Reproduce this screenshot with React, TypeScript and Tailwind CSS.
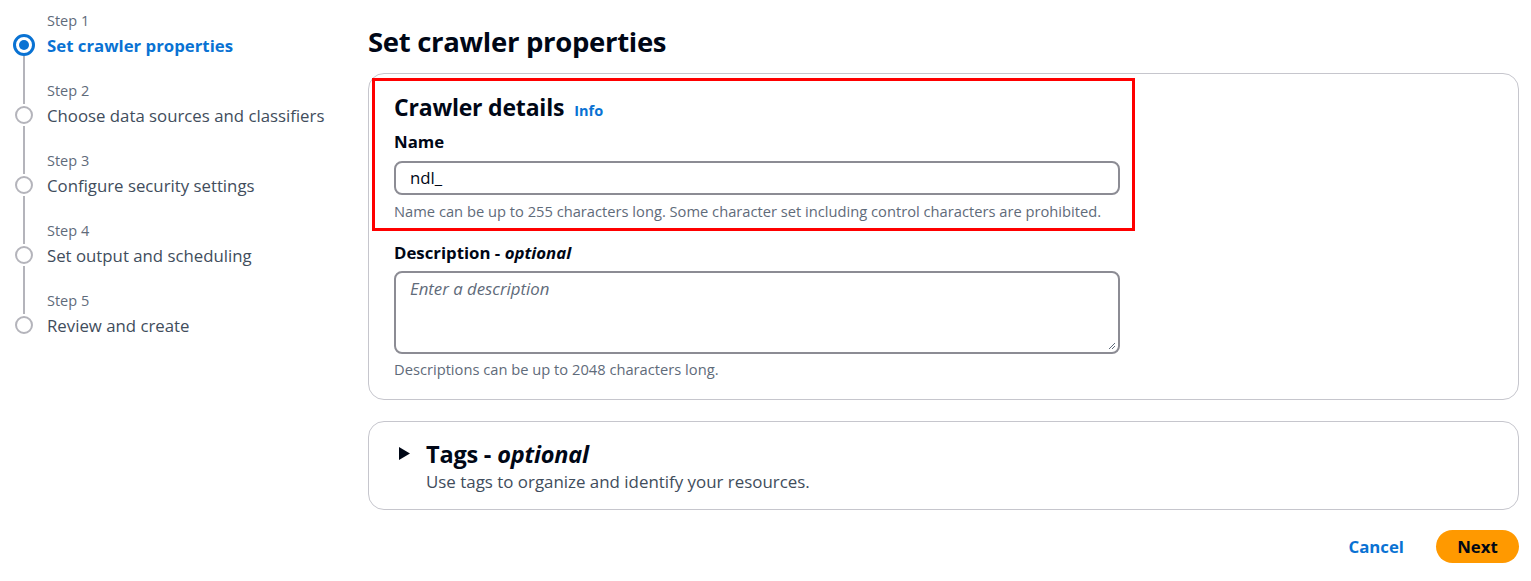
import React from "react";

const steps = [
  { n: 1, label: "Set crawler properties", active: true },
  { n: 2, label: "Choose data sources and classifiers" },
  { n: 3, label: "Configure security settings" },
  { n: 4, label: "Set output and scheduling" },
  { n: 5, label: "Review and create" },
];

export default function App() {
  return (
    <div
      className="w-[1531px] h-[581px] bg-white flex text-[#000716] overflow-hidden"
      style={{ fontFamily: "'Open Sans', 'Noto Sans', sans-serif" }}
    >
      {/* Left nav */}
      <div className="w-[368px] shrink-0 pl-[13px] pt-[11px]">
        {steps.map((s, i) => (
          <div key={s.n} className="flex">
            <div className="w-[22px] flex flex-col items-center">
              <div className={`w-[2px] h-[23px] ${i === 0 ? "bg-transparent" : "bg-[#b4b4bb]"}`} />
              {s.active ? (
                <div className="w-[22px] h-[22px] rounded-full border-[3px] border-[#0972d3] flex items-center justify-center shrink-0">
                  <div className="w-[10px] h-[10px] rounded-full bg-[#0972d3]" />
                </div>
              ) : (
                <div className="w-[18px] h-[18px] rounded-full border-[2px] border-[#b4b4bb] shrink-0 my-[2px]" />
              )}
              <div className={`w-[2px] flex-1 ${i === steps.length - 1 ? "bg-transparent" : "bg-[#b4b4bb]"}`} />
            </div>
            <div className="pl-[12px] h-[70px]">
              <div className="text-[14.5px] text-[#5f6b7a] leading-[18px] pt-[1px]">Step {s.n}</div>
              <div
                className={`text-[16.8px] leading-[22px] mt-[5px] ${
                  s.active ? "text-[#0972d3] font-bold" : "text-[#414d5c]"
                }`}
              >
                {s.label}
              </div>
            </div>
          </div>
        ))}
      </div>

      {/* Main */}
      <div className="flex-1 pr-[12px] pt-[24px]">
        <h1 className="text-[27.5px] font-bold leading-[36px] tracking-[-0.3px]">Set crawler properties</h1>

        <div className="mt-[13px] border border-[#c6c6cd] rounded-[16px] pt-[4px] pl-[3px] pb-[21px]">
          <div className="w-[763px] border-[3px] border-[#ff0000] pl-[19px] pr-[12px] pt-[12px] pb-[8px]">
            <div className="flex items-baseline gap-[10px]">
              <span className="text-[23px] font-bold leading-[28px] tracking-[-0.2px]">Crawler details</span>
              <span className="text-[14.5px] font-bold text-[#0972d3]">Info</span>
            </div>
            <div className="text-[16.8px] font-bold leading-[22px] mt-[9px]">Name</div>
            <div className="mt-[8px] h-[34px] border-2 border-[#8c8c94] rounded-[8px] flex items-center pl-[14px] text-[16.8px]">
              ndl_
            </div>
            <div className="text-[14.7px] text-[#5f6b7a] leading-[18px] mt-[7px]">
              Name can be up to 255 characters long. Some character set including control characters are prohibited.
            </div>
          </div>
          <div className="pl-[22px]">
            <div className="text-[16.8px] font-bold leading-[22px] mt-[11px]">
              Description - <i>optional</i>
            </div>
            <div className="mt-[7px] w-[726px] h-[83px] border-2 border-[#8c8c94] rounded-[8px] pl-[14px] pt-[3px] relative">
              <span className="text-[16.8px] italic text-[#5f6b7a]">Enter a description</span>
              <svg className="absolute right-[2px] bottom-[2px]" width="8" height="8" viewBox="0 0 8 8">
                <path d="M7 1L1 7M7 4L4 7" stroke="#5f6b7a" strokeWidth="1" />
              </svg>
            </div>
            <div className="text-[14.7px] text-[#5f6b7a] leading-[18px] mt-[6px]">
              Descriptions can be up to 2048 characters long.
            </div>
          </div>
        </div>

        <div className="mt-[21px] border border-[#c6c6cd] rounded-[16px] h-[89px] pl-[29px] pt-[17px]">
          <div className="flex items-center">
            <svg width="13" height="15" viewBox="0 0 13 15" className="mr-[15px]">
              <path d="M1 1L12 7.5L1 14Z" fill="#000716" />
            </svg>
            <span className="text-[23.5px] font-bold leading-[30px] tracking-[-0.2px]">
              Tags - <i>optional</i>
            </span>
          </div>
          <div className="pl-[28px] text-[16.9px] text-[#414d5c] leading-[22px] mt-[2px]">
            Use tags to organize and identify your resources.
          </div>
        </div>

        <div className="flex justify-end items-center mt-[20px] gap-[32px]">
          <span className="text-[16.8px] font-bold text-[#0972d3]">Cancel</span>
          <div className="w-[83px] h-[33px] rounded-full bg-[#ff9900] flex items-center justify-center text-[16.8px] font-bold">
            Next
          </div>
        </div>
      </div>
    </div>
  );
}
